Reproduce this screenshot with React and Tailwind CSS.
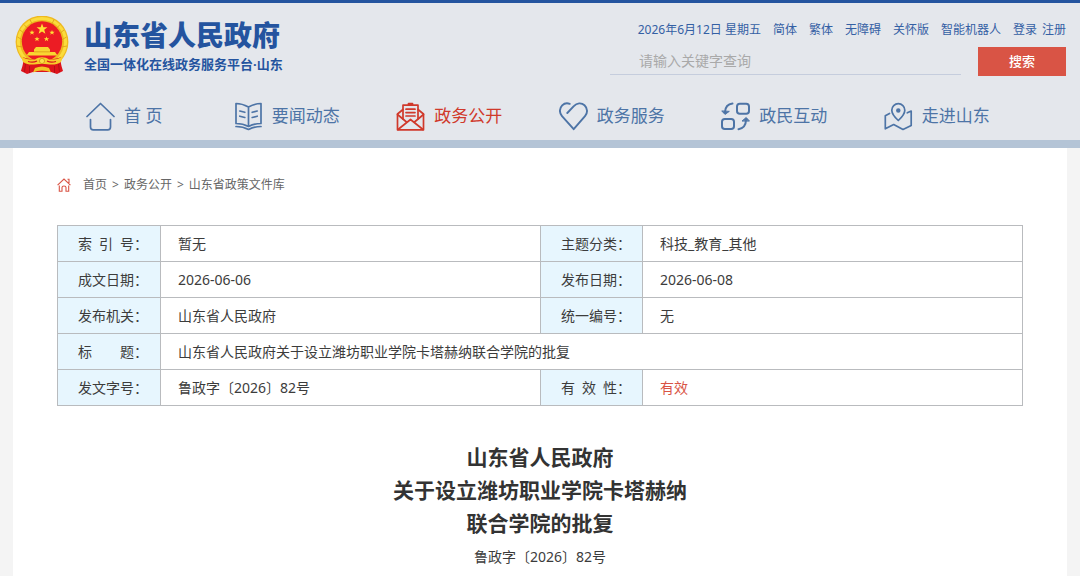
import React, { useState } from 'react';

const Emblem = () => (
  <svg viewBox="0 0 54 58" className="h-[58px] w-[54px] shrink-0" role="img" aria-label="国徽">
    <circle cx="27" cy="26" r="26.4" fill="#efb91f" />
    <circle cx="27" cy="26" r="23.6" fill="none" stroke="#fbdc3c" strokeWidth="3" />
    <path d="M5 14 L10 18 M9 8.5 L13 13 M15 3.5 L17.5 9 M49 14 L44 18 M45 8.5 L41 13 M39 3.5 L36.5 9 M2.5 21 L7.5 24 M51.5 21 L46.5 24 M2 30 L7.5 31 M52 30 L46.5 31" stroke="#dc9c18" strokeWidth="0.8" />
    <circle cx="27" cy="25.5" r="20.2" fill="#ec1c24" />
    <path d="M8 41 C16 45 38 45 46 41 C45 47 47 51 48 55 L42 58 L36 56 H18 L12 58 L6 55 C7 51 9 47 8 41 Z" fill="#dd141c" />
    <path d="M27 7.5 l1.4 3.8 h4 l-3.2 2.5 1.2 4 -3.4 -2.4 -3.4 2.4 1.2 -4 -3.2 -2.5 h4 Z" fill="#ffe135" />
    {[[17, 16.5], [37, 16.5], [22, 23], [31.5, 23]].map(([x, y]) => (
      <path
        key={`${x}-${y}`}
        transform={`translate(${x} ${y})`}
        d="M0 -2.6 l0.7 1.8 h1.9 l-1.5 1.2 0.6 1.9 -1.7 -1.2 -1.7 1.2 0.6 -1.9 -1.5 -1.2 h1.9 Z"
        fill="#ffe135"
      />
    ))}
    <path d="M21 31 H33 L35 33.5 V36 H40 L42.5 39.5 H11.5 L14 36 H19 V33.5 Z" fill="#f9d531" />
    <path d="M19 35.8 H35" stroke="#d99a18" strokeWidth="0.8" />
    <path d="M5 38 C9 43 13 44 20 43.5 C24 40.5 30 40.5 34 43.5 C41 44 45 43 49 38 L46 46 C40 50 35 48 27 48 C19 48 14 50 8 46 Z" fill="#f7cd2a" />
    <path d="M13 45.5 Q18 47 22 45 M41 45.5 Q36 47 32 45" stroke="#d8141c" strokeWidth="1.2" fill="none" />
    <circle cx="27" cy="45" r="2.6" fill="#fbe04a" stroke="#d08f14" strokeWidth="0.8" />
    <path d="M18 56.5 L20 52 Q27 49 34 52 L36 56.5 Q32 54.5 27 54.5 Q22 54.5 18 56.5 Z" fill="#f3c425" />
    <path d="M10.5 48 L9.5 56 M14.5 50 V57 M39.5 50 V57 M43.5 48 L44.5 56" stroke="#a90e14" strokeWidth="0.8" />
  </svg>
);

const NavIcon = ({ children }) => (
  <svg
    viewBox="0 0 29 29"
    className="size-[29px] shrink-0"
    fill="none"
    stroke="currentColor"
    strokeWidth="1.7"
    strokeLinecap="round"
    strokeLinejoin="round"
    aria-hidden="true"
  >
    {children}
  </svg>
);

const navItems = [
  {
    label: '首 页',
    icon: <path d="M1 14.5 L14.5 1.5 L28 14.5 M4.5 17.5 V25 Q4.5 27.8 7.3 27.8 H21.7 Q24.5 27.8 24.5 25 V17.5" />,
  },
  {
    label: '要闻动态',
    icon: (
      <>
        <path d="M14.5 5 Q8 1.5 2 1.5 V21.5 Q9 21.5 14.5 24.5 Q20 21.5 27 21.5 V1.5 Q21 1.5 14.5 5 V24.5" />
        <path d="M2 24.5 Q9 24.5 14.5 27.5 Q20 24.5 27 24.5" />
        <path d="M5.8 9 L10.8 10.3 M5.8 14.2 L10.8 15.5 M23.2 9 L18.2 10.3 M23.2 14.2 L18.2 15.5" />
      </>
    ),
  },
  {
    label: '政务公开',
    active: true,
    icon: (
      <>
        <path d="M7 17 V3.2 H22 V17 M12.5 3 V1.5 H16.5 V3" />
        <path d="M10 7.2 H19 M10 10.6 H19 M10 14 H19" />
        <path d="M7 7.5 L1.5 12 V27.8 H27.5 V12 L22 7.5" />
        <path d="M1.5 12.5 L10.5 20 M27.5 12.5 L18.5 20 M2 27.5 L14.5 17.5 L27 27.5" />
      </>
    ),
  },
  {
    label: '政务服务',
    icon: (
      <path
        strokeWidth="1.9"
        d="M8.3 11 L14.8 4.2 C17.8 0.9 22.4 0.4 25.5 3.3 C28.8 6.4 28.8 11 26 14.2 L14.7 27.2 L3 14.2 C0.2 11 0.2 6.5 3.2 3.4 C5.2 1.4 8 0.8 10.7 1.8"
      />
    ),
  },
  {
    label: '政民互动',
    icon: (
      <>
        <rect x="16" y="1.8" width="12" height="10" rx="2.8" strokeWidth="2" />
        <rect x="1" y="17" width="12" height="10" rx="2.8" strokeWidth="2" />
        <path strokeWidth="2" d="M11.5 1.6 Q4.5 2.5 4 10 M17.5 27.2 Q24.8 26 25 18" />
        <path d="M1 9.2 L4 12.4 L8 9.6 Z M21.3 18.8 L25.2 15.5 L28.2 18.8 Z" fill="currentColor" strokeWidth="1" />
      </>
    ),
  },
  {
    label: '走进山东',
    icon: (
      <>
        <path d="M14.3 18.5 Q7.8 12.5 7.8 8.2 A6.5 6.5 0 0 1 20.8 8.2 Q20.8 12.5 14.3 18.5 Z" />
        <circle cx="14.3" cy="8.6" r="1.4" fill="currentColor" />
        <path d="M5.5 11.5 L1.3 13.8 V26.8 L9.7 22.5 L19 27.5 L27.2 23.5 V9 L23.3 10.8" />
      </>
    ),
  },
];

const topLinks = ['简体', '繁体', '无障碍', '关怀版', '智能机器人'];

const Label = ({ children }) => (
  <th scope="row" className="border border-[#b9bbbe] bg-[#e7f6fe] pl-5 text-left font-normal whitespace-nowrap">
    {children}
  </th>
);

const Value = ({ children, colSpan, className = '' }) => (
  <td colSpan={colSpan} className={`border border-[#b9bbbe] pl-[17px] ${className}`}>
    {children}
  </td>
);

const Header = () => {
  const [keyword, setKeyword] = useState('');

  return (
    <header className="border-t-3 border-b-8 border-t-[#24549f] border-b-[#b4c4d6] bg-[#e4e7ec]">
      <div className="flex items-start justify-between pr-3.5 pl-[15px]">
        <a href="#home" className="flex pt-[13px] text-[#24549f]">
          <Emblem />
          <div className="ml-[15px]">
            <div className="text-[28px] leading-[38px] font-black">山东省人民政府</div>
            <div className="text-[13px] leading-5 font-bold">全国一体化在线政务服务平台·山东</div>
          </div>
        </a>

        <div className="w-[456px] pt-[17px]">
          <div className="flex justify-end gap-3 text-xs leading-5 whitespace-nowrap text-[#3460a4]">
            <span>2026年6月12日 星期五</span>
            {topLinks.map((item) => (
              <a key={item} href="#tool">{item}</a>
            ))}
            <span className="flex gap-[5px]">
              <a href="#login">登录</a>
              <a href="#register">注册</a>
            </span>
          </div>
          <form className="mt-[7px] flex justify-between" onSubmit={(e) => e.preventDefault()}>
            <input
              type="text"
              aria-label="搜索关键字"
              value={keyword}
              onChange={(e) => setKeyword(e.target.value)}
              placeholder="请输入关键字查询"
              className="h-7 w-[351px] border-b border-[#c5cddd] pl-[29px] text-sm outline-none placeholder:text-[#a9a9a9]"
            />
            <button type="submit" className="h-[29px] w-22 bg-[#d95445] text-[13px] font-medium text-white">
              搜索
            </button>
          </form>
        </div>
      </div>

      <nav className="grid grid-cols-6 pt-[25px] pr-[62px] pb-[9px] pl-[43px]">
        {navItems.map(({ label, icon, active }) => (
          <a
            key={label}
            href="#nav"
            className={`flex items-center justify-center gap-[9px] text-[17px] leading-[30px] ${active ? 'text-[#d0392b]' : 'text-[#4d74a6]'}`}
          >
            <NavIcon>{icon}</NavIcon>
            {label}
          </a>
        ))}
      </nav>
    </header>
  );
};

const App = () => (
  <div className="flex min-h-screen flex-col bg-[#f4f4f4] font-['Noto_Sans','Noto_Sans_CJK_SC',sans-serif] text-[#3c3c3c]" lang="zh-CN">
    <Header />

    <main className="mx-[13px] grow bg-white px-11">
      <nav aria-label="当前位置" className="flex items-center pt-[27px] text-xs leading-5 text-[#666]">
        <svg viewBox="0 0 14 14" className="mr-3 size-3.5" fill="none" stroke="#d95445" strokeWidth="1.1" aria-hidden="true">
          <path d="M0.6 7.2 L7 1 L13.4 7.2 M10.5 1.2 H12 V5" />
          <path d="M2.3 7.5 V13.3 H5 V9.5 Q5 8 7 8 Q9 8 9 9.5 V13.3 H11.7 V7.5" />
        </svg>
        <a href="#home">首页</a>
        <span className="mx-[5px]">&gt;</span>
        <a href="#open">政务公开</a>
        <span className="mx-[5px]">&gt;</span>
        <a href="#policy">山东省政策文件库</a>
      </nav>

      <table className="mt-[30px] w-full table-fixed border-collapse text-sm [&_tr]:h-9">
        <colgroup>
          <col className="w-[103px]" />
          <col />
          <col className="w-[102px]" />
          <col />
        </colgroup>
        <tbody>
          <tr>
            <Label>索&ensp;引&ensp;号：</Label>
            <Value>暂无</Value>
            <Label>主题分类：</Label>
            <Value>科技_教育_其他</Value>
          </tr>
          <tr>
            <Label>成文日期：</Label>
            <Value>2026-06-06</Value>
            <Label>发布日期：</Label>
            <Value>2026-06-08</Value>
          </tr>
          <tr>
            <Label>发布机关：</Label>
            <Value>山东省人民政府</Value>
            <Label>统一编号：</Label>
            <Value>无</Value>
          </tr>
          <tr>
            <Label>标&emsp;&emsp;题：</Label>
            <Value colSpan={3}>山东省人民政府关于设立潍坊职业学院卡塔赫纳联合学院的批复</Value>
          </tr>
          <tr>
            <Label>发文字号：</Label>
            <Value>鲁政字〔2026〕82号</Value>
            <Label>有&ensp;效&ensp;性：</Label>
            <Value className="text-[#d95445]">有效</Value>
          </tr>
        </tbody>
      </table>

      <article className="pt-[35px] text-center">
        <h1 className="text-[21px] leading-[33px] font-bold text-[#333]">
          山东省人民政府
          <br />
          关于设立潍坊职业学院卡塔赫纳
          <br />
          联合学院的批复
        </h1>
        <p className="mt-[7px] text-sm leading-5">鲁政字〔2026〕82号</p>
      </article>
    </main>
  </div>
);

export default App;
